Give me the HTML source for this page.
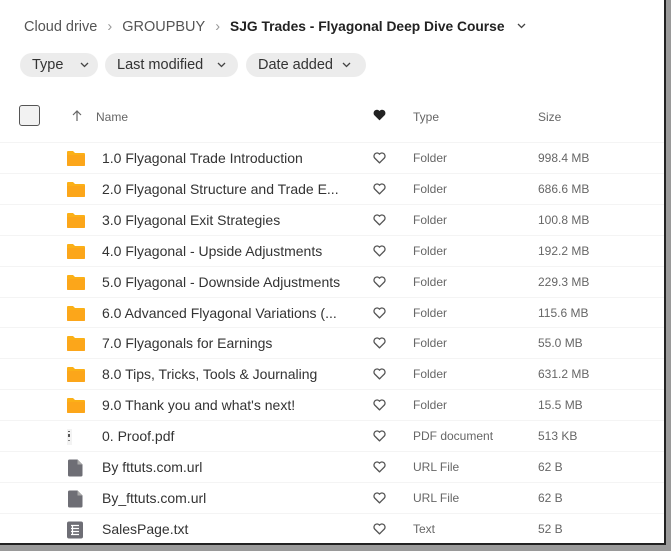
<!DOCTYPE html>
<html><head><meta charset="utf-8"><style>
*{margin:0;padding:0;box-sizing:border-box}
body{width:671px;height:551px;background:#9a9a9a;font-family:"Liberation Sans",sans-serif;position:relative;overflow:hidden}
#win{position:absolute;left:0;top:0;width:666px;height:545px;background:#fff;border-right:2px solid #222;border-bottom:2px solid #222}
.bc{position:absolute;top:19px;left:24px;font-size:14.5px;color:#555;white-space:nowrap}
.bc b{color:#222;font-size:13.8px}
.bc span.s{margin:0 10px;color:#999}
.chip{position:absolute;top:53px;height:24px;border-radius:12px;background:#ececec;font-size:14.5px;color:#333;line-height:24px;padding-left:12px;white-space:nowrap}
.chip svg{position:absolute;top:9px}
.hdr{position:absolute;top:110px;font-size:12px;color:#666}
.cb{position:absolute;left:19px;top:105px;width:21px;height:21px;border:1.5px solid #555;border-radius:3px;background:#f2f2f2}
.row{position:absolute;left:0;width:664px;height:31px;border-top:1px solid #f4f4f4}
.row .n{position:absolute;left:102px;top:7px;font-size:14px;color:#333;white-space:nowrap}
.row .t{position:absolute;left:413px;top:8px;font-size:12px;color:#666}
.row .z{position:absolute;left:538px;top:8px;font-size:12px;color:#666}
.row svg.h{position:absolute;left:373px;top:9px}
.row .ic{position:absolute;left:66px;top:7px}
</style></head><body><div id="win">
<div class="bc">Cloud drive<span class="s">›</span>GROUPBUY<span class="s">›</span><b>SJG Trades - Flyagonal Deep Dive Course</b></div>
<svg style="position:absolute;left:517px;top:23px" width="9" height="6" viewBox="0 0 9 6"><path d="M1 1l3.5 3.5L8 1" fill="none" stroke="#444" stroke-width="1.3"/></svg>
<div class="chip" style="left:20px;width:78px">Type<svg style="left:60px" width="9" height="6" viewBox="0 0 9 6"><path d="M1 1l3.5 3.5L8 1" fill="none" stroke="#444" stroke-width="1.3"/></svg></div>
<div class="chip" style="left:105px;width:133px">Last modified<svg style="left:112px" width="9" height="6" viewBox="0 0 9 6"><path d="M1 1l3.5 3.5L8 1" fill="none" stroke="#444" stroke-width="1.3"/></svg></div>
<div class="chip" style="left:246px;width:120px">Date added<svg style="left:96px" width="9" height="6" viewBox="0 0 9 6"><path d="M1 1l3.5 3.5L8 1" fill="none" stroke="#444" stroke-width="1.3"/></svg></div>
<div class="cb"></div>
<svg style="position:absolute;left:72px;top:110px" width="10" height="12" viewBox="0 0 10 12"><path d="M5 11V1M1 5l4-4 4 4" fill="none" stroke="#666" stroke-width="1.2"/></svg>
<div class="hdr" style="left:96px">Name</div>
<svg style="position:absolute;left:373px;top:109px" width="13" height="12" viewBox="0 0 24 22"><path d="M12 21L2.5 11.5A6 6 0 0 1 12 3.5A6 6 0 0 1 21.5 11.5Z" fill="#222"/></svg>
<div class="hdr" style="left:413px">Type</div>
<div class="hdr" style="left:538px">Size</div>
<div id="rows"></div>
</div>
<script>
var d=[["1.0 Flyagonal Trade Introduction","Folder","998.4 MB","f"],["2.0 Flyagonal Structure and Trade E...","Folder","686.6 MB","f"],["3.0 Flyagonal Exit Strategies","Folder","100.8 MB","f"],["4.0 Flyagonal - Upside Adjustments","Folder","192.2 MB","f"],["5.0 Flyagonal - Downside Adjustments","Folder","229.3 MB","f"],["6.0 Advanced Flyagonal Variations (...","Folder","115.6 MB","f"],["7.0 Flyagonals for Earnings","Folder","55.0 MB","f"],["8.0 Tips, Tricks, Tools &amp; Journaling","Folder","631.2 MB","f"],["9.0 Thank you and what's next!","Folder","15.5 MB","f"],["0. Proof.pdf","PDF document","513 KB","p"],["By fttuts.com.url","URL File","62 B","u"],["By_fttuts.com.url","URL File","62 B","u"],["SalesPage.txt","Text","52 B","t"]];
var ic={f:'<svg class="ic" width="20" height="17" viewBox="0 0 20 17"><path d="M1 2a1 1 0 0 1 1-1h5l2 2h9a1 1 0 0 1 1 1v11a1 1 0 0 1-1 1H2a1 1 0 0 1-1-1z" fill="#fbb017"/><path d="M1 5h18v10a1 1 0 0 1-1 1H2a1 1 0 0 1-1-1z" fill="#fca61a"/></svg>',
p:'<svg class="ic" width="20" height="18"><rect x="1" y="1" width="5" height="16" fill="#f3f3f3"/><rect x="2" y="3" width="2" height="1" fill="#666"/><rect x="2" y="6" width="2" height="3" fill="#555"/><rect x="2" y="12" width="2" height="1" fill="#888"/></svg>',
u:'<svg class="ic" width="20" height="18" viewBox="0 0 20 18"><path d="M2 2a1.5 1.5 0 0 1 1.5-1.5h8l5 5v10.5a1.5 1.5 0 0 1-1.5 1.5h-11.5a1.5 1.5 0 0 1-1.5-1.5z" fill="#6e6e75"/><path d="M11.5 0.5v5h5z" fill="#aaa"/></svg>',
t:'<svg class="ic" width="20" height="18" viewBox="0 0 20 18"><rect x="1" y="0.5" width="16" height="17" rx="2" fill="#6e6e75"/><g stroke="#fff" stroke-width="1.2"><path d="M5 4.5h8M5 7.5h8M5 10.5h8M5 13.5h8M6.5 4v10"/></g></svg>'};
var h='<svg class="h" width="13" height="12" viewBox="0 0 24 22"><path d="M12 20L3 11A5.5 5.5 0 0 1 12 4A5.5 5.5 0 0 1 21 11Z" fill="none" stroke="#555" stroke-width="2.4" stroke-linejoin="round"/></svg>';
var s='';d.forEach(function(r,i){s+='<div class="row" style="top:'+(142+i*30.9)+'px">'+ic[r[3]]+'<div class="n">'+r[0]+'</div>'+h+'<div class="t">'+r[1]+'</div><div class="z">'+r[2]+'</div></div>'});
document.getElementById('rows').innerHTML=s;
</script>
</body></html>
